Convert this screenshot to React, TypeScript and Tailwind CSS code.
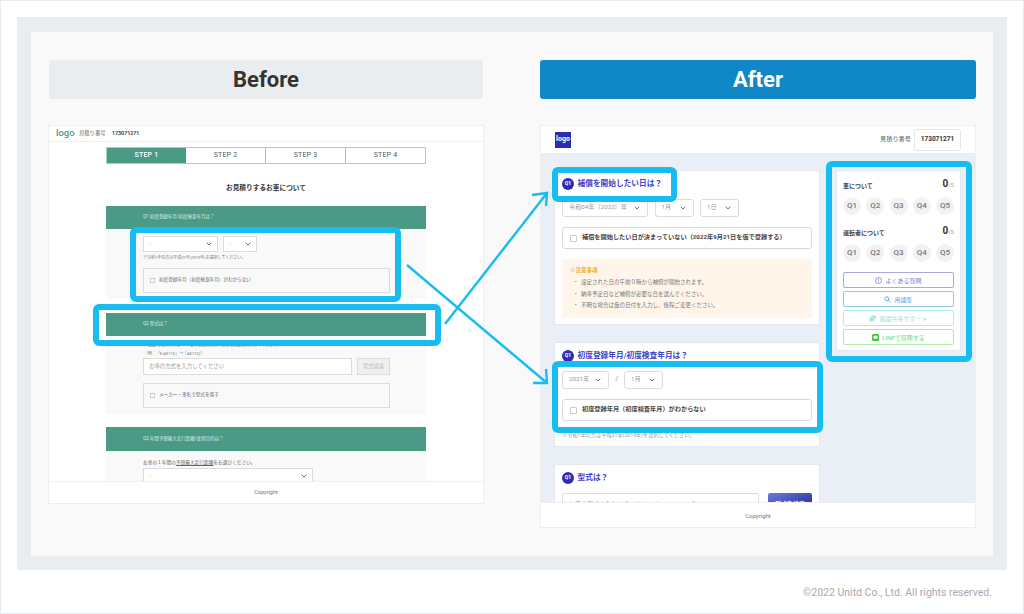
import type { ReactNode } from 'react';
import { ChevronDown } from 'lucide-react';

const font = "font-['Roboto','Noto_Sans_CJK_JP',sans-serif]";

function Select({ label, className, small }: { label: string; className: string; small?: boolean }) {
  return (
    <div className={`flex items-center justify-between bg-white border border-[#dcdcdc] ${small ? 'rounded-none text-[5px] pl-[5px] pr-[4px]' : 'rounded-[3px] text-[6.2px] pl-[6px] pr-[6px]'} text-[#999] ${className}`}>
      <span>{label}</span>
      <ChevronDown className="w-[8px] h-[8px] text-[#555]" strokeWidth={2.5} />
    </div>
  );
}

function BeforeCheck({ label, className }: { label: string; className: string }) {
  return (
    <div className={`flex items-center border border-[#dcdcdc] bg-[#f9f9f9] pl-[6px] gap-[4px] text-[4.6px] text-[#666] ${className}`}>
      <span className="w-[5px] h-[5px] border border-[#ccc] bg-white" />
      {label}
    </div>
  );
}

function AfterCheck({ label }: { label: string }) {
  return (
    <div className="flex items-center h-[22px] mt-[10px] rounded-[3px] border border-[#d8d8d8] bg-white pl-[7px] gap-[5px] text-[6.2px] font-bold text-[#444]">
      <span className="w-[7px] h-[7px] border border-[#ccc] rounded-[1px]" />
      {label}
    </div>
  );
}

function Title({ text }: { text: string }) {
  return (
    <div className="flex items-center gap-[3.5px]">
      <span className="w-[12px] h-[12px] rounded-full bg-[#2d2db4] text-white text-[5px] font-bold flex items-center justify-center">Q1</span>
      <span className="text-[7.7px] leading-[12px] font-bold text-[#4040c8]">{text}</span>
    </div>
  );
}

function Progress({ label }: { label: string }) {
  return (
    <div>
      <div className="flex items-end justify-between h-[11px]">
        <span className="text-[6px] font-bold text-[#444]">{label}</span>
        <span className="text-[10px] font-bold text-[#333] leading-[11px]">0<span className="text-[6px] font-normal text-[#aaa]">/5</span></span>
      </div>
      <div className="flex justify-between mt-[7px]">
        {['Q1', 'Q2', 'Q3', 'Q4', 'Q5'].map(q => (
          <span key={q} className="w-[18px] h-[18px] rounded-full bg-[#f2f2f2] text-[8px] font-medium text-[#777] flex items-center justify-center">{q}</span>
        ))}
      </div>
    </div>
  );
}

function SideButton({ label, className, icon }: { label: string; className: string; icon: ReactNode }) {
  return (
    <div className={`flex items-center justify-center gap-[3px] h-[16px] rounded-[2px] border text-[6px] bg-white ${className}`}>
      {icon}
      {label}
    </div>
  );
}

function Highlight({ className }: { className: string }) {
  return <div className={`absolute border-[6px] border-[#17bdf0] rounded-[6px] ${className}`} />;
}

function GreenBar({ text, className }: { text: string; className: string }) {
  return <div className={`bg-[#4a9a86] pl-[37px] flex items-center text-[4.5px] text-[#dcefe9] ${className}`}>{text}</div>;
}

export default function App() {
  return (
    <div className={`relative w-[1024px] h-[614px] bg-white overflow-hidden border border-[#e9ecef] ${font}`}>
      <div className="mx-[16px] mt-[16px] h-[553px] bg-[#eaedf0] px-[14px] pt-[15px]">
        <div className="h-[524px] bg-[#f9f9f9] pl-[17px] pt-[28px] flex gap-[56px]">
          {/* before */}
          <div className="w-[436px]">
            <div className="mx-[1px] h-[39px] rounded-[3px] bg-[#eaedf0] flex items-center justify-center text-[22px] font-bold text-[#333]">Before</div>
            <div className="mt-[26px] h-[379px] border border-[#eee] bg-white flex flex-col overflow-hidden">
              <div className="h-[16px] shrink-0 border-b border-[#eee] flex items-center pl-[7px] text-[5.3px] text-[#666]">
                <span className="text-[9.5px] font-medium text-[#4a9a86] w-[23px]">logo</span>
                <span className="w-[33px]">見積り番号</span>
                <span className="font-bold text-[#444]">173071271</span>
              </div>
              <div className="flex-1 overflow-hidden px-[57px]">
                <div className="mt-[5px] h-[17px] flex border border-[#a3d2c6] text-[7px] tracking-[0.2px]">
                  <div className="flex-1 bg-[#4a9a86] text-white font-medium flex items-center justify-center">STEP 1</div>
                  <div className="flex-1 border-r border-[#8fc7b9] text-[#555] flex items-center justify-center">STEP 2</div>
                  <div className="flex-1 border-r border-[#8fc7b9] text-[#555] flex items-center justify-center">STEP 3</div>
                  <div className="flex-1 text-[#555] flex items-center justify-center">STEP 4</div>
                </div>
                <div className="mt-[18px] text-[6.7px] font-bold text-[#333] text-center leading-[12px]">お見積りするお車について</div>
                <GreenBar text="Q1 初度登録年月/初度検査年月は？" className="mt-[12px] h-[23px]" />
                <div className="h-[70px] bg-[#f9f9f9] pl-[37px] pr-[36px] pt-[7px]">
                  <div className="flex gap-[5px]">
                    <Select small label="-" className="w-[75px] h-[16px]" />
                    <Select small label="-" className="w-[34px] h-[16px]" />
                  </div>
                  <div className="mt-[1px] text-[4px] text-[#777] leading-[9px]">※令和1年の方は平成31年(2019年)を選択してください。</div>
                  <BeforeCheck label="初度登録年月（初度検査年月）がわからない" className="mt-[6px] h-[25px]" />
                </div>
                <GreenBar text="Q2 型式は？" className="mt-[14px] h-[23px]" />
                <div className="h-[78px] bg-[#f9f9f9] pl-[37px] pr-[36px]">
                  <div className="pt-[6px] text-[4px] text-[#777] leading-[8px]">※ DBA-等のハイフン（-）より前は省略してお車の型式を入力してください。<br />&nbsp;（例：「E-AE110」→「AE110」）</div>
                  <div className="flex gap-[5px]">
                    <div className="w-[209px] h-[17px] bg-white border border-[#dcdcdc] pl-[5px] flex items-center text-[5.4px] text-[#999]">お車の方式を入力してください</div>
                    <div className="w-[33px] h-[17px] border border-[#dcdcdc] bg-[#f0f0f0] flex items-center justify-center text-[5.4px] text-[#bbb]">型式検索</div>
                  </div>
                  <BeforeCheck label="メーカー・車名で型式を探す" className="mt-[8px] h-[25px]" />
                </div>
                <GreenBar text="Q3 年間予想最大走行距離/使用目的は？" className="mt-[13px] h-[24px]" />
                <div className="h-[40px] bg-[#f9f9f9] pl-[37px] pt-[7px]">
                  <div className="text-[4.7px] text-[#666] leading-[9px]">お車の１年間の<span className="underline">予想最大走行距離</span>をお選びください。</div>
                  <Select small label="-" className="mt-[1px] w-[170px] h-[16px]" />
                </div>
              </div>
              <div className="h-[22px] shrink-0 border-t border-[#eee] bg-white flex items-center justify-center text-[5.5px] text-[#777]">Copyright</div>
            </div>
          </div>
          {/* after */}
          <div className="w-[436px]">
            <div className="h-[39px] rounded-[3px] bg-[#1088c8] flex items-center justify-center text-[22px] font-bold text-white">After</div>
            <div className="mt-[26px] h-[403px] border border-[#eee] bg-white flex flex-col overflow-hidden">
              <div className="h-[27px] shrink-0 flex items-center justify-between px-[14px] text-[#666]">
                <span className="w-[16px] h-[16px] bg-[#2d2db4] text-white text-[7px] font-bold flex items-center justify-center">logo</span>
                <div className="flex items-center gap-[3px]">
                  <span className="text-[6.2px]">見積り番号</span>
                  <span className="w-[47px] h-[22px] border border-[#e6e6e6] rounded-[2px] flex items-center justify-center font-bold text-[6.5px] text-[#333]">173071271</span>
                </div>
              </div>
              <div className="flex-1 overflow-hidden bg-[#eaeff6] pl-[13px] pt-[17px] flex gap-[16px] items-start">
                <div className="w-[266px] flex flex-col gap-[17px]">
                  <div className="h-[155px] bg-white border border-[#e4e8ee] rounded-[2px] px-[7px] pt-[7px]">
                    <Title text="補償を開始したい日は？" />
                    <div className="mt-[9px] flex gap-[6.5px]">
                      <Select label="令和04年（2022）年" className="w-[86px] h-[18px]" />
                      <Select label="1月" className="w-[39px] h-[18px]" />
                      <Select label="1日" className="w-[39px] h-[18px]" />
                    </div>
                    <AfterCheck label="補償を開始したい日が決まっていない（2022年9月21日を仮で登録する）" />
                    <div className="mt-[10px] h-[59px] rounded-[2px] bg-[#fff5ea] pl-[8px] pt-[5px]">
                      <div className="text-[5.5px] font-bold text-[#f5a623] leading-[12px]">※注意事項</div>
                      <ul className="mt-[1px] text-[5.5px] text-[#777] leading-[11.7px] pl-[3px]">
                        <li>・<span className="ml-[2.5px]">設定された日の午前０時から補償が開始されます。</span></li>
                        <li>・<span className="ml-[2.5px]">納車予定日など補償が必要な日を選んでください。</span></li>
                        <li>・<span className="ml-[2.5px]">不明な場合は仮の日付を入力し、後程ご変更ください。</span></li>
                      </ul>
                    </div>
                  </div>
                  <div className="h-[105px] bg-white border border-[#e4e8ee] rounded-[2px] px-[7px] pt-[7px]">
                    <Title text="初度登録年月/初度検査年月は？" />
                    <div className="mt-[9px] flex items-center">
                      <Select label="2021年" className="w-[47px] h-[18px]" />
                      <span className="w-[15px] text-center text-[6.5px] text-[#888]">/</span>
                      <Select label="1月" className="w-[39px] h-[18px]" />
                    </div>
                    <AfterCheck label="初度登録年月（初度検査年月）がわからない" />
                    <div className="mt-[10px] text-[5.2px] text-[#999] leading-[9px]">※令和1年の方は平成31年(2019年)を選択してください。</div>
                  </div>
                  <div className="h-[80px] bg-white border border-[#e4e8ee] rounded-[2px] px-[7px] pt-[7px]">
                    <Title text="型式は？" />
                    <div className="mt-[9px] flex gap-[9px]">
                      <div className="w-[197px] h-[20px] border border-[#dcdcdc] rounded-[2px] pl-[6px] flex items-center text-[6px] text-[#999]">お車の型式を入力してください（E-AE110 →「AE110」</div>
                      <div className="w-[44px] h-[20px] rounded-[2px] bg-gradient-to-br from-[#7078dc] to-[#1c1c98] flex items-center justify-center text-[6px] font-bold text-white">型式を検索</div>
                    </div>
                  </div>
                </div>
                <div className="w-[125px] h-[181px] bg-white border border-[#e4e8ee] rounded-[2px] px-[6px] pt-[8px]">
                  <Progress label="車について" />
                  <div className="mt-[11px]"><Progress label="運転者について" /></div>
                  <div className="mt-[10px] flex flex-col gap-[3px]">
                    <SideButton label="よくある質問" className="border-[#a8a8e4] text-[#7c7cd4]" icon={
                      <svg width="7" height="7" viewBox="0 0 14 14" fill="none" stroke="currentColor" strokeWidth="1.6"><circle cx="7" cy="7" r="6" /><path d="M7 3.5v4M7 9.5v1.2" /></svg>
                    } />
                    <SideButton label="用語集" className="border-[#98c4f0] text-[#6aa8e4]" icon={
                      <svg width="7" height="7" viewBox="0 0 14 14" fill="none" stroke="currentColor" strokeWidth="2"><circle cx="5.5" cy="5.5" r="4" /><path d="M8.5 8.5L13 13" /></svg>
                    } />
                    <SideButton label="画面共有サポート" className="border-[#b0ecec] text-[#a4e0e0]" icon={
                      <svg width="7" height="7" viewBox="0 0 14 14" fill="currentColor"><rect x="4" y="1" width="9.5" height="8" rx="2" /><rect x="0.5" y="4.5" width="9.5" height="8.5" rx="2" stroke="#fff" /></svg>
                    } />
                    <SideButton label="LINEで質問する" className="border-[#a8eca8] text-[#70d870]" icon={
                      <svg width="7" height="7" viewBox="0 0 14 14"><rect width="14" height="14" rx="3" fill="#3cc83c" /><ellipse cx="7" cy="6.6" rx="4.4" ry="3.6" fill="#fff" /></svg>
                    } />
                  </div>
                </div>
              </div>
              <div className="h-[25px] shrink-0 border-t border-[#eee] bg-white flex items-center justify-center text-[6px] text-[#777]">Copyright</div>
            </div>
          </div>
        </div>
      </div>
      <div className="mt-[15px] pr-[31px] text-right text-[10.5px] text-[#aaa]">©2022 Unitd Co., Ltd. All rights reserved.</div>

      {/* annotations */}
      <Highlight className="left-[129px] top-[226px] w-[271px] h-[75px]" />
      <Highlight className="left-[92px] top-[303px] w-[348px] h-[42px]" />
      <Highlight className="left-[551px] top-[166px] w-[125px] h-[35px]" />
      <Highlight className="left-[551px] top-[360px] w-[271px] h-[72px]" />
      <Highlight className="left-[825px] top-[160px] w-[146px] h-[201px]" />
      <svg className="absolute left-0 top-0 pointer-events-none" width="1022" height="612" fill="none" stroke="#17bdf0" strokeWidth="2.4">
        <path d="M444 323L546 192M531 194L546 192L545 205" />
        <path d="M406 264L546 382M532 382L546 382L545 368" />
      </svg>
    </div>
  );
}
